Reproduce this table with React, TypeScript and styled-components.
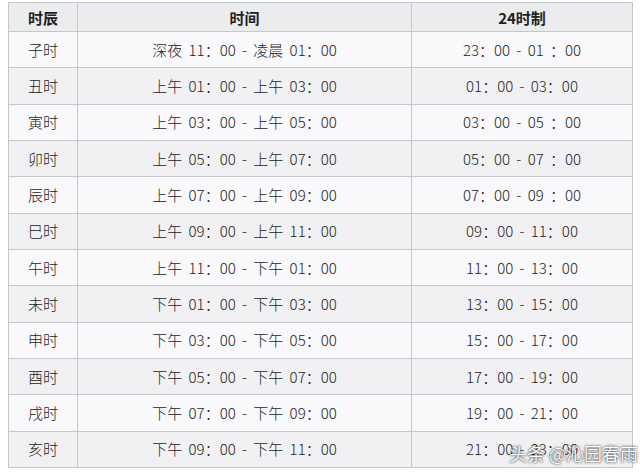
import React from "react";
import styled, { createGlobalStyle } from "styled-components";

const GlobalStyle = createGlobalStyle`
  html, body {
    margin: 0;
    padding: 0;
    background: #ffffff;
  }
  body {
    font-family: "Noto Sans CJK SC", "DejaVu Sans", sans-serif;
  }
`;

const rows: [string, string, string][] = [
  ["子时", "深夜 11：00 - 凌晨 01：00", "23：00 - 01 ：00"],
  ["丑时", "上午 01：00 - 上午 03：00", "01：00 - 03：00"],
  ["寅时", "上午 03：00 - 上午 05：00", "03：00 - 05 ：00"],
  ["卯时", "上午 05：00 - 上午 07：00", "05：00 - 07 ：00"],
  ["辰时", "上午 07：00 - 上午 09：00", "07：00 - 09 ：00"],
  ["巳时", "上午 09：00 - 上午 11：00", "09：00 - 11：00"],
  ["午时", "上午 11：00 - 下午 01：00", "11：00 - 13：00"],
  ["未时", "下午 01：00 - 下午 03：00", "13：00 - 15：00"],
  ["申时", "下午 03：00 - 下午 05：00", "15：00 - 17：00"],
  ["酉时", "下午 05：00 - 下午 07：00", "17：00 - 19：00"],
  ["戌时", "下午 07：00 - 下午 09：00", "19：00 - 21：00"],
  ["亥时", "下午 09：00 - 下午 11：00", "21：00 - 23：00"],
];

export default function App() {
  return (
    <>
      <GlobalStyle />
      <Page>
        <Table>
          <colgroup>
            <col style={{ width: 69 }} />
            <col style={{ width: 334 }} />
            <col style={{ width: 221 }} />
          </colgroup>
          <thead>
            <HeadRow>
              <HeadCell>时辰</HeadCell>
              <HeadCell>时间</HeadCell>
              <HeadCell>24时制</HeadCell>
            </HeadRow>
          </thead>
          <tbody>
            {rows.map(([name, time, h24], i) => (
              <BodyRow key={name} shaded={i % 2 === 1}>
                <Cell>{name}</Cell>
                <Cell>{time}</Cell>
                <Cell>{h24}</Cell>
              </BodyRow>
            ))}
          </tbody>
        </Table>
        <Watermark>头条 @沁园春雨</Watermark>
      </Page>
    </>
  );
}

const Page = styled.div`
  position: relative;
  width: 640px;
  height: 475px;
  padding: 2px 0 0 8px;
  box-sizing: border-box;
  overflow: hidden;
`;

const Table = styled.table`
  width: 624px;
  table-layout: fixed;
  border-collapse: collapse;
  border: 1px solid #c4c7cc;
  color: #222222;
  font-size: 15px;
`;

const HeadRow = styled.tr`
  height: 29px;
  background: #ebecee;
`;

const HeadCell = styled.th`
  border: 1px solid #c4c7cc;
  padding: 0;
  text-align: center;
  font-weight: 700;
  font-size: 15px;
`;

const BodyRow = styled.tr<{ shaded: boolean }>`
  height: 36.33px;
  background: ${({ shaded }) => (shaded ? "#f1f1f3" : "#f9f9fb")};
`;

const Cell = styled.td`
  border: 1px solid #c4c7cc;
  padding: 0;
  text-align: center;
  white-space: pre;
  line-height: 20px;
  word-spacing: 3px;
  font-weight: 300;
`;

const Watermark = styled.div`
  position: absolute;
  right: 2px;
  top: 440px;
  font-size: 18px;
  color: #ffffff;
  text-shadow: 0 0 3px rgba(0, 0, 0, 0.7), 0 0 1px rgba(0, 0, 0, 0.7);
`;
